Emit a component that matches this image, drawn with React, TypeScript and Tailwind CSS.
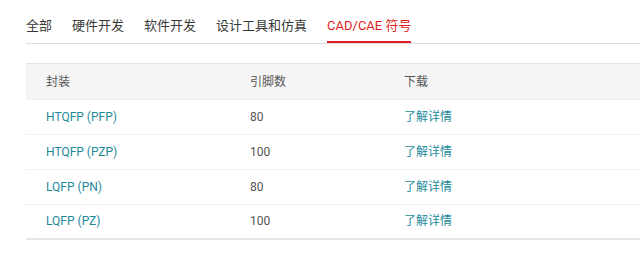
const tabs = ["全部", "硬件开发", "软件开发", "设计工具和仿真", "CAD/CAE 符号"];

const rows = [
  { pkg: "HTQFP (PFP)", pins: "80" },
  { pkg: "HTQFP (PZP)", pins: "100" },
  { pkg: "LQFP (PN)", pins: "80" },
  { pkg: "LQFP (PZ)", pins: "100" },
];

export default function App() {
  return (
    <div
      className="w-[640px] h-[269px] bg-white pl-[26px] pt-[14px] overflow-hidden"
      style={{ fontFamily: 'Roboto, "Noto Sans CJK SC", sans-serif' }}
    >
      <div className="flex border-b border-[#dedede] h-[30px]">
        {tabs.map((t, i) => {
          const active = i === tabs.length - 1;
          return (
            <div
              key={t}
              className={`mr-[20px] text-[13px] leading-[24px] whitespace-nowrap border-b-2 ${
                active ? "text-[#e01e24] border-[#e01e24]" : "text-[#3a3a3a] border-transparent"
              }`}
            >
              {t}
            </div>
          );
        })}
      </div>

      <table className="mt-[19px] w-[614px] border-collapse text-[12px] text-left">
        <thead>
          <tr className="bg-[#f5f5f5] border-t border-[#e4e4e4] h-[36px]">
            <th className="w-[204px] pl-[20px] font-normal text-[#555]">封装</th>
            <th className="w-[154px] pl-[20px] font-normal text-[#555]">引脚数</th>
            <th className="pl-[20px] font-normal text-[#555]">下载</th>
          </tr>
        </thead>
        <tbody>
          {rows.map((r, i) => (
            <tr
              key={r.pkg}
              className={`border-t border-[#efefef] ${
                i === rows.length - 1 ? "h-[34px] border-b-2 border-b-[#e6e6e6]" : "h-[35px]"
              }`}
            >
              <td className="pl-[20px] text-[#1d8a9a]">{r.pkg}</td>
              <td className="pl-[20px] text-[#555]">{r.pins}</td>
              <td className="pl-[20px] text-[#1d8a9a]">了解详情</td>
            </tr>
          ))}
        </tbody>
      </table>
    </div>
  );
}
